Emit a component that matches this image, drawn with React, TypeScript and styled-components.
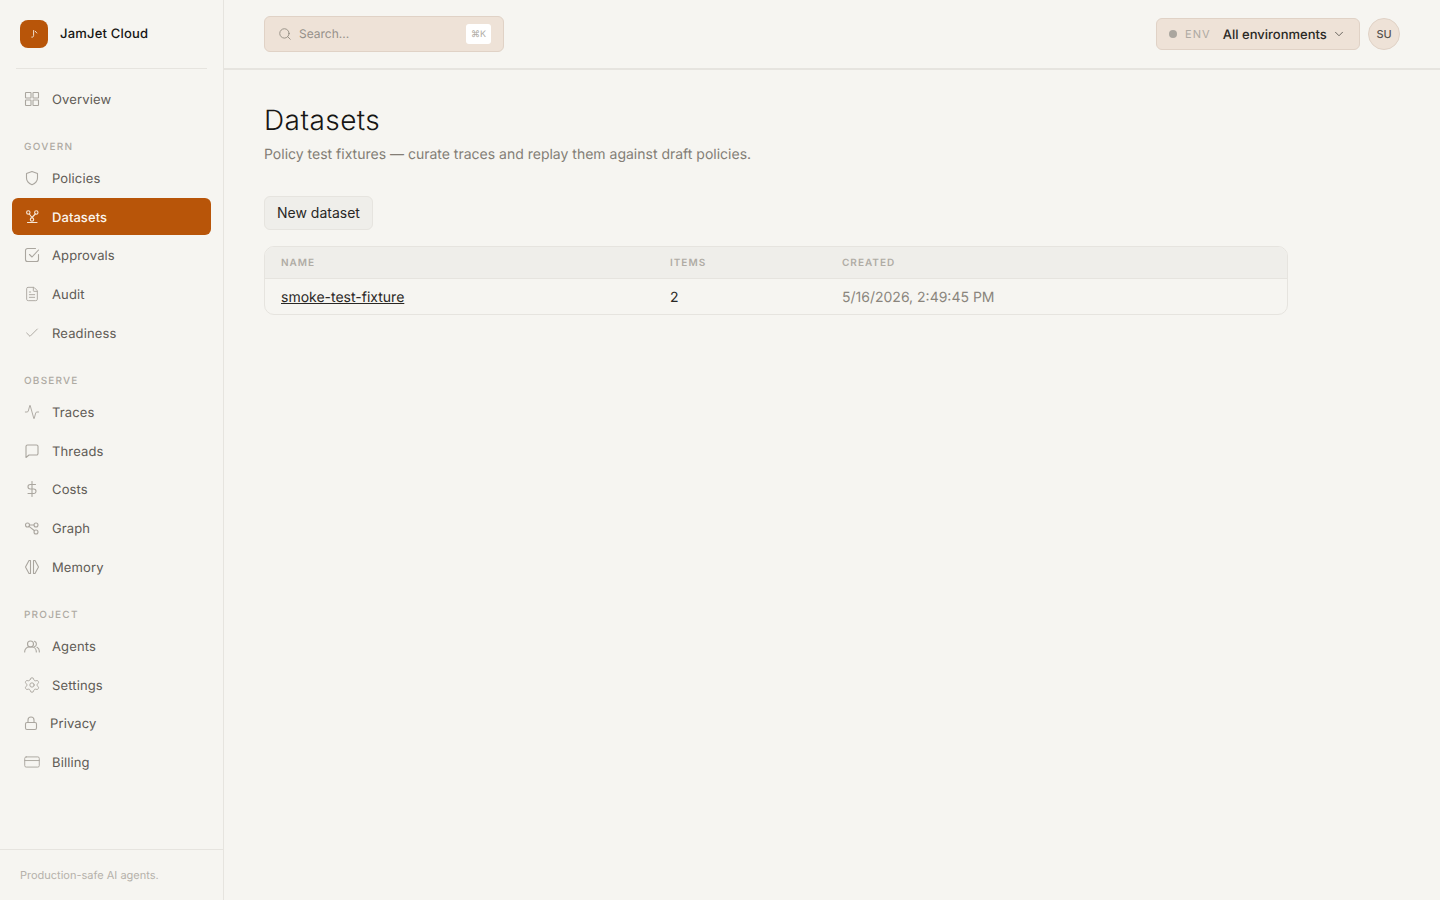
import React from "react";
import styled, { createGlobalStyle } from "styled-components";
import { Activity, Check, ChevronDown, CreditCard, FileText, Search, Settings } from "lucide-react";

const GlobalStyle = createGlobalStyle`
  html, body {
    margin: 0;
    height: 100%;
    background: #f6f5f1;
  }
  body {
    font-family: Inter, "Liberation Sans", sans-serif;
    color: #171614;
    text-rendering: geometricPrecision;
    -webkit-font-smoothing: antialiased;
  }
  * {
    box-sizing: border-box;
  }
`;

const Glyph = ({ children, width = 16 }: { children: React.ReactNode; width?: number }) => (
  <svg width={width} height="16" viewBox={`0 0 ${width} 16`} fill="none" stroke="currentColor" strokeWidth="1.1" strokeLinecap="round" strokeLinejoin="round">
    {children}
  </svg>
);

const icons: Record<string, React.ReactNode> = {
  Overview: (
    <Glyph>
      <rect x="1.500" y="1.500" width="5.500" height="5.500" rx="0.600" />
      <rect x="9" y="1.500" width="5.500" height="5.500" rx="0.600" />
      <rect x="1.500" y="9" width="5.500" height="5.500" rx="0.600" />
      <rect x="9" y="9" width="5.500" height="5.500" rx="0.600" />
    </Glyph>
  ),
  Policies: (
    <Glyph>
      <path d="M8 1.500 13.500 3.500V8C13.500 11.500 11 13.500 8 14.700 5 13.500 2.500 11.500 2.500 8V3.500Z" />
    </Glyph>
  ),
  Datasets: (
    <Glyph>
      <circle cx="4.300" cy="3.500" r="1.700" />
      <circle cx="12.300" cy="3.500" r="1.700" />
      <path d="M5.300 5 8 8.500 11.300 5" />
      <circle cx="8" cy="10.600" r="1.700" />
      <path d="M3.500 13.500h9.500" />
    </Glyph>
  ),
  Approvals: (
    <Glyph>
      <path d="M14.500 7.500v5a2 2 0 0 1-2 2h-9a2 2 0 0 1-2-2v-9a2 2 0 0 1 2-2h8" />
      <path d="M5.500 7.500 8 10 14.500 3" />
    </Glyph>
  ),
  Audit: <FileText size={16} strokeWidth={1.4} />,
  Readiness: <Check size={16} strokeWidth={1.4} />,
  Traces: <Activity size={16} strokeWidth={1.4} />,
  Threads: (
    <Glyph>
      <path d="M2 3.500A1.500 1.500 0 0 1 3.500 2h9A1.500 1.500 0 0 1 14 3.500v7a1.500 1.500 0 0 1-1.500 1.500H5L2 14.500Z" />
    </Glyph>
  ),
  Costs: (
    <Glyph>
      <path d="M8 .500v15M11.500 3.500H6.250a2.250 2.250 0 0 0 0 4.500h3.500a2.250 2.250 0 0 1 0 4.500H4" />
    </Glyph>
  ),
  Graph: (
    <Glyph>
      <circle cx="3.500" cy="5" r="2" />
      <circle cx="12" cy="5" r="2" />
      <circle cx="12" cy="12" r="2" />
      <path d="M5.500 5H10M5 6.400 10.500 10.700" />
    </Glyph>
  ),
  Memory: (
    <Glyph>
      <path d="M6.500 1.500H5L1.500 8 5 14.500h1.500Z" />
      <path d="M9.500 1.500H11L14.500 8 11 14.500H9.500Z" />
    </Glyph>
  ),
  Agents: (
    <Glyph>
      <circle cx="6.500" cy="6" r="3" />
      <path d="M.700 14v-.5A4.500 4.500 0 0 1 5.200 9h2.600a4.500 4.500 0 0 1 4.500 4.500v.5" />
      <path d="M10.500 3.200a3 3 0 0 1 0 5.600M13 9.300c1.300.6 2.300 2 2.300 3.700v1" />
    </Glyph>
  ),
  Settings: <Settings size={16} strokeWidth={1.3} viewBox="1 1 22 22" />,
  Privacy: (
    <Glyph width={14}>
      <rect x="1.500" y="7.500" width="11" height="7" rx="1.500" />
      <path d="M4 7.500V5a3 3 0 0 1 6 0v2.500" />
    </Glyph>
  ),
  Billing: <CreditCard size={16} strokeWidth={1.3} viewBox="1 1 22 22" />,
};

const nav: { title?: string; items: string[] }[] = [
  { items: ["Overview"] },
  { title: "GOVERN", items: ["Policies", "Datasets", "Approvals", "Audit", "Readiness"] },
  { title: "OBSERVE", items: ["Traces", "Threads", "Costs", "Graph", "Memory"] },
  { title: "PROJECT", items: ["Agents", "Settings", "Privacy", "Billing"] },
];

const App: React.FC = () => {
  return (
    <>
      <GlobalStyle />
      <Shell>
        <Sidebar>
          <Brand>
            <BrandLogo>
              <svg width="10" height="10" viewBox="0 0 10 10" fill="none" stroke="#f6efe6" strokeWidth="0.9" strokeLinecap="round">
                <path d="M4.600 1.500V6.500C4.600 7.800 3.700 8.400 2.800 8.200" />
                <path d="M6.200 2.200 7.800 4" />
              </svg>
            </BrandLogo>
            <BrandName>JamJet Cloud</BrandName>
          </Brand>
          <Nav>
            {nav.map((group, i) => (
              <NavGroup key={i}>
                {group.title && <GroupTitle>{group.title}</GroupTitle>}
                {group.items.map((label) => (
                  <NavItem key={label} $active={label === "Datasets"}>
                    <NavIcon $active={label === "Datasets"}>{icons[label]}</NavIcon>
                    <NavLabel>{label}</NavLabel>
                  </NavItem>
                ))}
              </NavGroup>
            ))}
          </Nav>
          <SidebarFooter>Production-safe AI agents.</SidebarFooter>
        </Sidebar>
        <Main>
          <TopBar>
            <SearchBox>
              <Search size={14} strokeWidth={1.5} color="#8f897f" />
              <SearchText>Search...</SearchText>
              <Kbd>⌘K</Kbd>
            </SearchBox>
            <TopRight>
              <EnvSelect>
                <EnvDot />
                <EnvLabel>ENV</EnvLabel>
                <EnvValue>All environments</EnvValue>
                <ChevronDown size={14} strokeWidth={1.5} color="#57534e" />
              </EnvSelect>
              <Avatar>SU</Avatar>
            </TopRight>
          </TopBar>
          <Content>
            <Title>Datasets</Title>
            <Subtitle>
              Policy test fixtures — curate traces and replay them against draft policies.
            </Subtitle>
            <NewButton>New dataset</NewButton>
            <TableWrap>
              <Table>
                <colgroup>
                  <col style={{ width: 389 }} />
                  <col style={{ width: 172 }} />
                  <col />
                </colgroup>
                <thead>
                  <tr>
                    <Th>NAME</Th>
                    <Th>ITEMS</Th>
                    <Th>CREATED</Th>
                  </tr>
                </thead>
                <tbody>
                  <tr>
                    <Td>
                      <RowLink href="#">smoke-test-fixture</RowLink>
                    </Td>
                    <Td>2</Td>
                    <Td $muted>5/16/2026, 2:49:45 PM</Td>
                  </tr>
                </tbody>
              </Table>
            </TableWrap>
          </Content>
        </Main>
      </Shell>
    </>
  );
};

export default App;

const Shell = styled.div`
  display: flex;
  height: 900px;
  overflow: hidden;
`;

const Sidebar = styled.aside`
  width: 224px;
  flex-shrink: 0;
  display: flex;
  flex-direction: column;
  border-right: 1px solid #e6e4df;
`;

const Brand = styled.div`
  height: 69px;
  margin: 0 16px;
  padding: 0 4px 1px;
  display: flex;
  align-items: center;
  gap: 12px;
  border-bottom: 1px solid #e6e4df;
`;

const BrandLogo = styled.div`
  width: 28px;
  height: 28px;
  border-radius: 8px;
  background: #b85509;
  display: flex;
  align-items: center;
  justify-content: center;
`;

const BrandName = styled.span`
  font-size: 13px;
  font-weight: 500;
  letter-spacing: 0.2px;
  color: #171614;
`;

const Nav = styled.nav`
  flex: 1;
  padding: 11.5px 12px 0;
  display: flex;
  flex-direction: column;
  gap: 20px;
`;

const NavGroup = styled.div`
  display: flex;
  flex-direction: column;
  gap: 2px;
`;

const GroupTitle = styled.div`
  padding: 0 12px;
  height: 20.25px;
  line-height: 20px;
  font-size: 10px;
  font-weight: 500;
  letter-spacing: 1.2px;
  color: #aeaaa3;
`;

const NavItem = styled.a<{ $active: boolean }>`
  height: 36.75px;
  padding: 0 12px;
  display: flex;
  align-items: center;
  gap: 12px;
  border-radius: 6px;
  font-size: 13px;
  letter-spacing: ${({ $active }) => ($active ? "0.06px" : "0.13px")};
  font-weight: ${({ $active }) => ($active ? 500 : 400)};
  color: ${({ $active }) => ($active ? "#fbf6ef" : "#5f5b55")};
  background: ${({ $active }) => ($active ? "#b85509" : "transparent")};
`;

const NavIcon = styled.span<{ $active: boolean }>`
  display: flex;
  color: ${({ $active }) => ($active ? "#f6e6d6" : "#aaa69f")};
`;

const NavLabel = styled.span`
  padding-top: 2px;
`;

const SidebarFooter = styled.footer`
  height: 51px;
  padding: 18px 20px 0;
  border-top: 1px solid #e6e4df;
  font-size: 11px;
  line-height: 14px;
  color: #b5b1aa;
`;

const Main = styled.main`
  flex: 1;
  min-width: 0;
  display: flex;
  flex-direction: column;
`;

const TopBar = styled.header`
  height: 70px;
  padding: 0 40px;
  display: flex;
  align-items: center;
  justify-content: space-between;
  border-bottom: 2px solid #e6e4df;
`;

const SearchBox = styled.div`
  width: 240px;
  height: 36px;
  padding: 0 12px 0 13px;
  display: flex;
  align-items: center;
  gap: 7px;
  border-radius: 6px;
  background: #eee2d7;
  border: 1px solid #e0d2c6;
`;

const SearchText = styled.span`
  flex: 1;
  padding-bottom: 2px;
  font-size: 12px;
  color: #96918a;
`;

const Kbd = styled.kbd`
  width: 25px;
  height: 20px;
  display: flex;
  align-items: center;
  justify-content: center;
  border-radius: 3px;
  background: #ffffff;
  font-family: Inter, "Liberation Sans", sans-serif;
  font-size: 9px;
  color: #aeaaa3;
`;

const TopRight = styled.div`
  display: flex;
  align-items: center;
  gap: 8px;
`;

const EnvSelect = styled.div`
  width: 204px;
  height: 32px;
  padding: 0 12px;
  display: flex;
  align-items: center;
  border-radius: 6px;
  background: #eee2d7;
  border: 1px solid #e0d2c6;
`;

const EnvDot = styled.span`
  width: 8px;
  height: 8px;
  border-radius: 50%;
  background: #aaa69f;
`;

const EnvLabel = styled.span`
  margin-left: 8px;
  font-size: 11px;
  letter-spacing: 1.1px;
  color: #aeaaa3;
`;

const EnvValue = styled.span`
  margin: 0 5px 0 12px;
  padding-top: 1px;
  font-size: 13px;
  font-weight: 500;
  color: #2a2825;
  white-space: nowrap;
`;

const Avatar = styled.div`
  width: 32px;
  height: 32px;
  border-radius: 50%;
  display: flex;
  align-items: center;
  justify-content: center;
  background: #eee2d7;
  border: 1px solid #e0d2c6;
  font-size: 11px;
  font-weight: 500;
  color: #57534e;
`;

const Content = styled.div`
  padding: 32px 40px;
`;

const Title = styled.h1`
  margin: 0;
  font-size: 28px;
  line-height: 36px;
  font-weight: 300;
  letter-spacing: 0.45px;
  color: #171614;
`;

const Subtitle = styled.p`
  margin: 6px 0 0;
  font-size: 14px;
  line-height: 21px;
  color: #837e76;
`;

const NewButton = styled.button`
  display: block;
  margin-top: 31px;
  height: 34px;
  padding: 0 12px 2px;
  border-radius: 6px;
  border: 1px solid #e6e4df;
  background: #efeeea;
  font-family: inherit;
  font-size: 14px;
  color: #2a2825;
`;

const TableWrap = styled.div`
  margin-top: 16px;
  width: 1024px;
  border: 1px solid #e6e4df;
  border-radius: 10px;
  overflow: hidden;
`;

const Table = styled.table`
  width: 100%;
  border-collapse: collapse;
  table-layout: fixed;
`;

const Th = styled.th`
  height: 31px;
  padding: 2px 16px 0;
  text-align: left;
  background: #efeeea;
  border-bottom: 1px solid #e6e4df;
  font-size: 10px;
  font-weight: 600;
  letter-spacing: 1px;
  color: #b0aca5;
`;

const Td = styled.td<{ $muted?: boolean }>`
  height: 36px;
  padding: 2px 16px 0;
  font-size: 14px;
  color: ${({ $muted }) => ($muted ? "#8a857d" : "#2a2825")};
`;

const RowLink = styled.a`
  color: #2a2825;
  text-decoration: underline;
`;
